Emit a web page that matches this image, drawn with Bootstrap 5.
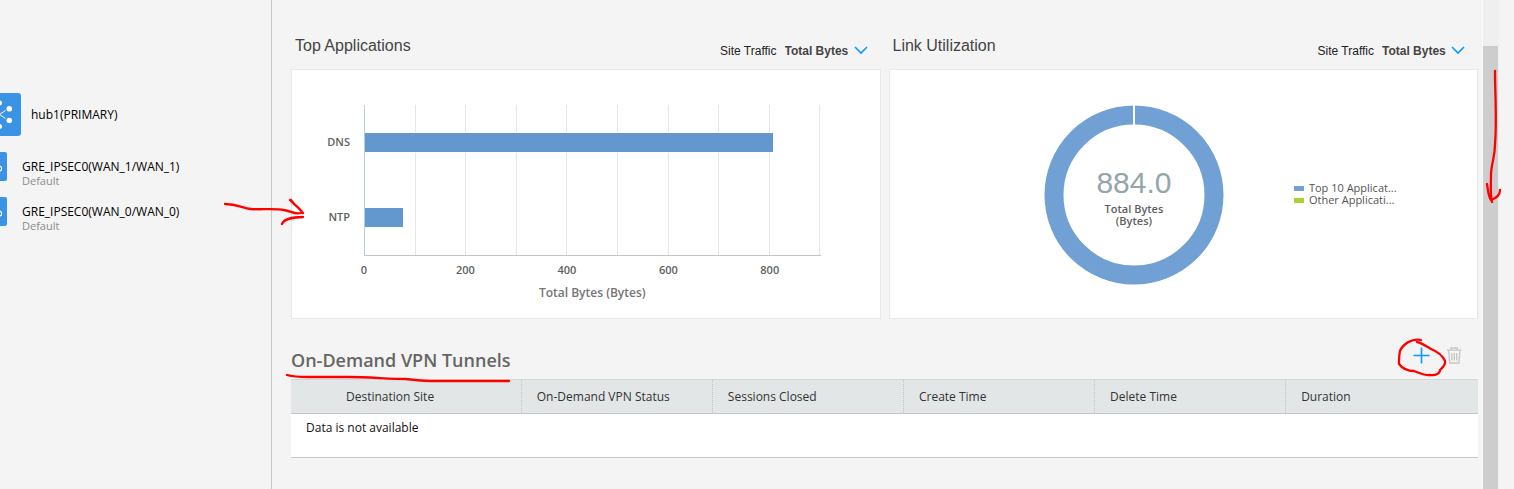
<!DOCTYPE html>
<html lang="en">
<head>
<meta charset="utf-8">
<meta name="viewport" content="width=device-width, initial-scale=1">
<title>Site Dashboard</title>
<link href="https://cdn.jsdelivr.net/npm/bootstrap@5.3.0/dist/css/bootstrap.min.css" rel="stylesheet">
<style>
  body { background: #f4f4f4; font-family: "Open Sans", sans-serif; font-size: 12px; line-height: 16px; color: #000; }
  .ink { position: absolute; overflow: visible; pointer-events: none; fill: none; stroke: #f00; stroke-width: 2.3; stroke-linecap: round; stroke-linejoin: round; z-index: 3; }

  .site-nav { width: 272px; padding-top: 93px; border-right: 1px solid #c8c8c8; }
  .hub { gap: 10px; margin-bottom: 16px; }
  .hub svg { margin-left: -22px; }
  .tunnel { gap: 15px; margin-bottom: 16px; }
  .tunnel svg { margin-left: -22px; }
  .tunnel-text { line-height: 14px; padding-top: 8px; margin-bottom: -8px; }
  .tunnel-text span { color: #8c8c8c; font-size: 11px; }
  .arrow-chart { left: 224px; top: 196px; }

  .content { padding: 32px 4px 31px 19px; }
  .panels { gap: 8px; }
  .panel { flex: 1 1 0; min-width: 0; }
  .panel-head { height: 37px; padding: 0 13px 0 4px; font-family: "Liberation Sans", sans-serif; }
  .panel-head h2 { font-size: 16px; line-height: 28px; color: #444; }
  .panel-head label { font-size: 12px; color: #222; }
  .metric { appearance: none; border: 0; padding: 0 19px 0 0; margin-left: 8px; font: bold 12px/16px "Liberation Sans", sans-serif; color: #444;
    background: url("data:image/svg+xml,%3Csvg xmlns='http://www.w3.org/2000/svg' width='14' height='9'%3E%3Cpath d='M1 1l6 6 6-6' fill='none' stroke='%230d96ff' stroke-width='1.6'/%3E%3C/svg%3E") no-repeat right center; }
  .panel-body { height: 250px; background: #fff; border: 1px solid #e8e8e8; }

  .chart { padding: 35px 59px 0 0; color: #606060; font-weight: 600; font-size: 11px; }
  .y-names { width: 72px; padding-right: 14px; text-align: right; }
  .y-names div { height: 75px; line-height: 74px; }
  .plot { display: grid; height: 151px; border-left: 1px solid #b8cde2; border-bottom: 1px solid #c4c4c4; }
  .plot-layer { grid-area: 1 / 1; }
  .grid-step { flex: 1 1 0; border-right: 1px solid #e6e6e6; }
  .bar-row { height: 75px; }
  .bar { height: 21px; background: #6398cf; border: solid #fff; border-width: 1px 0; }
  .ticks { margin-left: -11.111%; padding-top: 6px; }
  .ticks span { flex: 1 1 0; text-align: center; }
  .axis-title { font-size: 12px; color: #757575; padding-top: 7px; }

  .donut-area { padding: 35px 0 0 26.2%; gap: 70px; }
  .donut { display: grid; place-items: center; }
  .donut > * { grid-area: 1 / 1; }
  .donut-text { font-size: 11px; line-height: 12px; font-weight: 600; color: #606060; }
  .donut-total { font: 30px/40px "Liberation Sans", sans-serif; color: #95a5a9; }
  .legend-list { font-size: 11px; line-height: 12px; font-weight: 500; color: #555; padding-top: 77px; }
  .legend-list li { display: flex; align-items: center; gap: 5px; }
  .swatch { width: 10px; height: 5px; margin-top: 1px; }
  .swatch-top { background: #71a1d4; }
  .swatch-other { background: #aad033; }

  .section-head { height: 60px; padding: 23px 16px 0 0; }
  .section-head h2 { font-size: 18px; line-height: 36px; font-weight: 600; color: #666; }
  .tool { border: 0; padding: 0; background: none; line-height: 0; }
  .tools { gap: 17px; padding-top: 5px; }
  .ink-line { left: -5px; top: 33px; }
  .ink-ring { left: -14px; top: -8px; }

  .tunnels { table-layout: fixed; width: 100%; border-top: 1px solid #d5d8d8; border-bottom: 1px solid #c8c8c8; background: #fff; }
  .tunnels th { height: 34px; padding: 0 0 0 15px; background: #e2e6e6; border-bottom: 1px solid #c6c6c6; border-left: 1px dotted #c0c4c4; font-weight: 400; color: #333; vertical-align: middle; }
  .tunnels th:first-child { padding-left: 55px; border-left: 0; }
  .tunnels td { height: 44px; padding: 6px 15px; vertical-align: top; color: #111; }

  .scroll-track { width: 17px; margin-right: 15px; padding: 46px 1px 0 0; background: #efefef; border-left: 1px solid #fafafa; }
  .scroll-thumb { background: #cdcdcd; }
  .arrow-scroll { left: 3px; top: 70px; }
</style>
</head>
<body>
<div class="d-flex min-vh-100">

  <nav class="site-nav position-relative flex-shrink-0" aria-label="Hubs">
    <div class="hub d-flex align-items-center">
      <svg width="43" height="43" viewBox="0 0 43 43" aria-hidden="true">
        <rect width="43" height="43" rx="3" fill="#3a93e4"/>
        <path d="M27.500 17.500l-6 4 6 4" stroke="#fff" stroke-width="1" fill="none"/>
        <g fill="#fff"><circle cx="31.300" cy="15.700" r="2.800"/><circle cx="31.300" cy="27.500" r="2.800"/><circle cx="21.500" cy="10" r="2.500"/><circle cx="21.500" cy="33.500" r="2.500"/></g>
      </svg>
      <span>hub1(PRIMARY)</span>
    </div>
    <div class="tunnel d-flex">
      <svg width="29" height="29" viewBox="0 0 29 29" aria-hidden="true"><rect width="29" height="29" rx="2" fill="#3a93e4"/><circle cx="21" cy="16.500" r="2.600" fill="none" stroke="#fff" stroke-width="1.200"/></svg>
      <div class="tunnel-text">GRE_IPSEC0(WAN_1/WAN_1)<br><span>Default</span></div>
    </div>
    <div class="tunnel d-flex">
      <svg width="29" height="29" viewBox="0 0 29 29" aria-hidden="true"><rect width="29" height="29" rx="2" fill="#3a93e4"/><circle cx="21" cy="16.500" r="2.600" fill="none" stroke="#fff" stroke-width="1.200"/></svg>
      <div class="tunnel-text">GRE_IPSEC0(WAN_0/WAN_0)<br><span>Default</span></div>
    </div>
    <svg class="ink arrow-chart" width="80" height="30" viewBox="0 0 80 30" aria-hidden="true">
      <path d="M1 8C14 8 18 12 27 13S50 12 60 14C67 15 71 19 77 17M67 4l3 4M66 4C71 9 76 13 79 17M79 21C70 21 60 23 58 28"/>
    </svg>
  </nav>

  <main class="content flex-grow-1">
    <div class="panels d-flex">
      <section class="panel">
        <div class="panel-head d-flex justify-content-between">
          <h2 class="m-0">Top Applications</h2>
          <div class="d-flex align-items-center">
            <label for="app-metric">Site Traffic</label>
            <select id="app-metric" class="metric"><option>Total Bytes</option></select>
          </div>
        </div>
        <div class="panel-body chart">
          <div class="d-flex">
            <div class="y-names flex-shrink-0"><div>DNS</div><div>NTP</div></div>
            <div class="flex-grow-1">
              <div class="plot">
                <div class="plot-layer d-flex">
                  <i class="grid-step"></i><i class="grid-step"></i><i class="grid-step"></i><i class="grid-step"></i><i class="grid-step"></i><i class="grid-step"></i><i class="grid-step"></i><i class="grid-step"></i><i class="grid-step"></i>
                </div>
                <div class="plot-layer">
                  <div class="bar-row d-flex align-items-center"><div class="bar" style="width:89.6%"></div></div>
                  <div class="bar-row d-flex align-items-center"><div class="bar" style="width:8.4%"></div></div>
                </div>
              </div>
              <div class="ticks d-flex"><span>0</span><span>200</span><span>400</span><span>600</span><span>800</span></div>
              <div class="axis-title text-center">Total Bytes (Bytes)</div>
            </div>
          </div>
        </div>
      </section>

      <section class="panel">
        <div class="panel-head d-flex justify-content-between">
          <h2 class="m-0">Link Utilization</h2>
          <div class="d-flex align-items-center">
            <label for="link-metric">Site Traffic</label>
            <select id="link-metric" class="metric"><option>Total Bytes</option></select>
          </div>
        </div>
        <div class="panel-body donut-area d-flex align-items-start">
          <div class="donut flex-shrink-0">
            <svg width="180" height="180" viewBox="0 0 180 180" aria-hidden="true">
              <circle cx="90" cy="90" r="80" fill="none" stroke="#71a1d4" stroke-width="19"/>
              <path d="M90 0v20" stroke="#fff" stroke-width="2"/>
            </svg>
            <div class="donut-text text-center">
              <div class="donut-total">884.0</div>
              <div>Total Bytes</div>
              <div>(Bytes)</div>
            </div>
          </div>
          <ul class="legend-list list-unstyled m-0">
            <li><i class="swatch swatch-top"></i>Top 10 Applicat...</li>
            <li><i class="swatch swatch-other"></i>Other Applicati...</li>
          </ul>
        </div>
      </section>
    </div>

    <div class="section-head d-flex justify-content-between align-items-start">
      <div class="position-relative">
        <h2 class="m-0">On-Demand VPN Tunnels</h2>
        <svg class="ink ink-line" width="224" height="8" viewBox="0 0 224 8" aria-hidden="true"><path d="M1 0C8 2 12 2 22 2H62C82 2 104 4 120 4C130 5 137 6 150 6H223"/></svg>
      </div>
      <div class="tools d-flex">
        <div class="position-relative">
          <button type="button" class="tool" aria-label="Add tunnel">
            <svg width="17" height="17" viewBox="0 0 17 17"><path d="M8.500 .5v16M.5 8.500h16" stroke="#0d96ff" stroke-width="1.600"/></svg>
          </button>
          <svg class="ink ink-ring" width="48" height="40" viewBox="0 0 48 40" aria-hidden="true"><path d="M22 1C13-1 4 5 1 12C0 16 0 20 0 25C3 29 8 32 15 32C21 34 25 37 31 36C37 37 41 34 41 31C43 29 47 26 46 22C43 15 37 12 32 10C27 7 23 4 18 3"/></svg>
        </div>
        <button type="button" class="tool" aria-label="Delete tunnel">
          <svg width="15" height="17" viewBox="0 0 15 17" fill="none" stroke="#c6c6c6" stroke-width="1.300"><path d="M0 3.200h14.500M4 3V1h6.500v2M1.700 3.500l1 12.500h9.200l1-12.500M4.900 6v7.500M7.300 6v7.500M9.700 6v7.500"/></svg>
        </button>
      </div>
    </div>

    <table class="tunnels">
      <colgroup><col style="width:19.400%"><col style="width:16.100%"><col style="width:16.100%"><col style="width:16.100%"><col style="width:16.100%"><col></colgroup>
      <thead><tr><th>Destination Site</th><th>On-Demand VPN Status</th><th>Sessions Closed</th><th>Create Time</th><th>Delete Time</th><th>Duration</th></tr></thead>
      <tbody><tr><td colspan="6">Data is not available</td></tr></tbody>
    </table>
  </main>

  <div class="scroll-track position-relative d-flex flex-column flex-shrink-0" aria-hidden="true">
    <div class="scroll-thumb flex-grow-1"></div>
    <svg class="ink arrow-scroll" width="18" height="135" viewBox="0 0 18 135"><path d="M9 1C9 25 11 50 9 74C9 88 5 94 5 105C5 115 4 124 6 132M1 114C2 120 2 126 5 130C8 129 14 126 14 120"/></svg>
  </div>
</div>
<script src="https://cdn.jsdelivr.net/npm/bootstrap@5.3.0/dist/js/bootstrap.bundle.min.js"></script>
</body>
</html>
